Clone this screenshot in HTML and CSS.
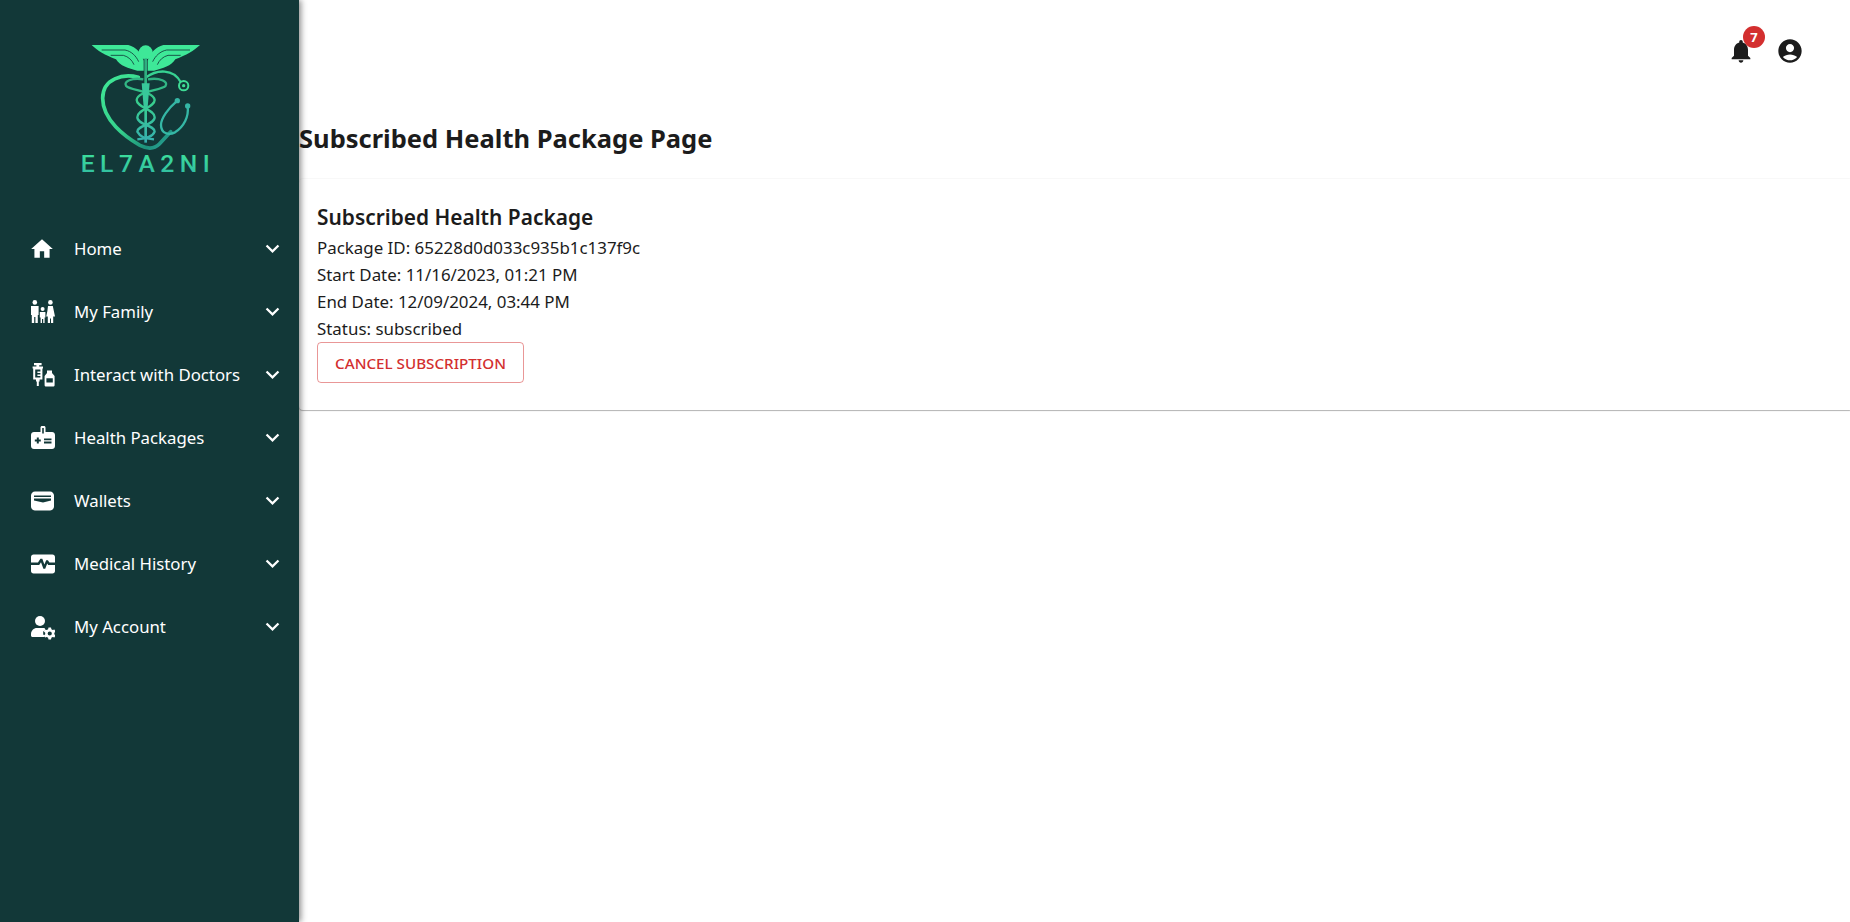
FILE: index.html
```html
<!DOCTYPE html>
<html lang="en">
<head>
    <meta charset="UTF-8">
    <title>Subscribed Health Package</title>
    <link rel="stylesheet" href="styles.css">
</head>
<body>
    <aside class="sidebar">
        <div class="logo">
            <svg width="180" height="170" viewBox="0 0 540 510">
                <defs>
                    <linearGradient id="logo-grad" x1="0" y1="0" x2="0" y2="1">
                        <stop offset="0" stop-color="#3fe79a"/>
                        <stop offset="1" stop-color="#2fb7a2"/>
                    </linearGradient>
                    <linearGradient id="staff-grad" gradientUnits="userSpaceOnUse" x1="0" y1="170" x2="0" y2="370">
                        <stop offset="0" stop-color="#2fae80"/>
                        <stop offset="0.4" stop-color="#38cf8f"/>
                        <stop offset="1" stop-color="#36aeb0"/>
                    </linearGradient>
                    <linearGradient id="heart-grad" gradientUnits="userSpaceOnUse" x1="125" y1="170" x2="320" y2="385">
                        <stop offset="0" stop-color="#40e896"/>
                        <stop offset="0.55" stop-color="#35d08c"/>
                        <stop offset="0.85" stop-color="#1d8f7a"/>
                        <stop offset="1" stop-color="#2ba79a"/>
                    </linearGradient>
                </defs>
                <!-- wings -->
                <path fill="#3ee898" d="M95 75H205C228 80 247 102 251 122V152H232C205 145 180 138 168 118 135 105 112 92 95 75Z"/>
                <path fill="#3ee898" d="M420 75H310C287 80 268 102 263 122V152H282C309 145 334 138 346 118 379 105 402 92 420 75Z"/>
                <path fill="none" stroke="#123838" stroke-width="2.5" d="M125 90H195C215 94 228 108 236 125M152 106H190C205 110 216 120 222 134"/>
                <path fill="none" stroke="#123838" stroke-width="2.5" d="M390 90H320C300 94 286 108 278 125M362 106H324C309 110 298 120 292 134"/>
                <circle cx="257" cy="97" r="21" fill="#3ee898"/>
                <!-- heart and stethoscope tube -->
                <path fill="none" stroke="url(#heart-grad)" stroke-width="11" stroke-linecap="round" d="M235 172C190 160 128 175 128 235 128 300 195 350 240 376 268 390 285 385 298 372L332 335"/>
                <path fill="none" stroke="#37d292" stroke-width="7" d="M258 172C290 148 340 145 362 186"/>
                <circle cx="371" cy="197" r="14" fill="none" stroke="#3fdc95" stroke-width="6"/>
                <circle cx="371" cy="197" r="5" fill="#3fdc95"/>
                <!-- staff and snakes -->
                <path fill="none" stroke="url(#staff-grad)" stroke-width="8" d="M257 115V368"/>
                <path fill="none" stroke="url(#staff-grad)" stroke-width="7" d="M250 178C215 172 190 185 198 197 210 212 280 212 284 240 284 262 232 268 232 292 232 315 284 315 284 335 278 350 262 355 232 358"/>
                <path fill="none" stroke="url(#staff-grad)" stroke-width="7" d="M264 178C300 172 325 185 317 197 305 212 232 212 230 240 230 262 284 268 284 292 284 315 232 315 232 335 240 350 252 355 282 358"/>
                <path fill="#38c79a" d="M245 190H269L263 262 257 272 251 262Z"/>
                <path fill="none" stroke="#35b7a5" stroke-width="7" stroke-linecap="round" d="M352 242C325 265 303 295 303 315 303 340 325 347 345 337 372 320 387 290 383 258"/>
                <circle cx="352" cy="242" r="8" fill="#35b7a5"/>
                <circle cx="383" cy="258" r="8" fill="#35b7a5"/>
                <text class="logo-text" x="62" y="456" fill="url(#logo-grad)" textLength="387">EL7A2NI</text>
            </svg>
        </div>
        <nav class="menu">
            <a class="menu-item">
                <svg class="menu-icon" viewBox="0 0 24 24"><path d="M10 20v-6h4v6h5v-8h3L12 3 2 12h3v8z"/></svg>
                <span class="menu-label">Home</span>
                <svg class="chevron" viewBox="0 0 24 24"><path d="M16.59 8.59 12 13.17 7.41 8.59 6 10l6 6 6-6z"/></svg>
            </a>
            <a class="menu-item">
                <svg class="menu-icon" viewBox="-2 -1 26 26"><circle cx="3.8" cy="2.4" r="2.3"/><circle cx="19.4" cy="2.4" r="2.3"/><circle cx="11.6" cy="9" r="2"/><path d="M0 6H7.6V15H6.8V23H4.4V17H3.2V23H.8V15H0ZM8.8 12H14.4V17.6H13.6V23H12.2V19H11V23H9.6V17.6H8.8ZM17 6H21.8L24 16.6H22.2V23H20V18.4H19V23H16.8V16.6H15.2L16.4 11Z"/></svg>
                <span class="menu-label">My Family</span>
                <svg class="chevron" viewBox="0 0 24 24"><path d="M16.59 8.59 12 13.17 7.41 8.59 6 10l6 6 6-6z"/></svg>
            </a>
            <a class="menu-item">
                <svg class="menu-icon" viewBox="-2 -1 26 26"><path fill-rule="evenodd" d="M3 0H10.6V2.2H8.2V3.5H12V5.6H11.4V16.4H8.6V18.5H7.8V23H5.8V18.5H5V16.4H2.2V5.6H1.6V3.5H5.4V2.2H3ZM4.2 6.4V14.4H9.4V13H6.4V11.4H9.4V10H6.4V8.4H9.4V6.4Z"/><path fill-rule="evenodd" d="M16 7.5H21V10L23.6 13V22C23.6 23 23 23.6 22 23.6H15.2C14.2 23.6 13.6 23 13.6 22V13L16 10ZM15.4 15.2V19.4H21.8V15.2Z"/></svg>
                <span class="menu-label">Interact with Doctors</span>
                <svg class="chevron" viewBox="0 0 24 24"><path d="M16.59 8.59 12 13.17 7.41 8.59 6 10l6 6 6-6z"/></svg>
            </a>
            <a class="menu-item">
                <svg class="menu-icon" viewBox="-2 -1 26 26"><path fill-rule="evenodd" d="M9.5 6V1.5C9.5.7 10.2 0 11 0H13C13.8 0 14.5.7 14.5 1.5V6H21C22.7 6 24 7.3 24 9V20C24 21.7 22.7 23 21 23H3C1.3 23 0 21.7 0 20V9C0 7.3 1.3 6 3 6ZM11.2 7.6H12.8V2H11.2ZM5.8 11.6V13.6H3.8V15.6H5.8V17.6H7.8V15.6H9.8V13.6H7.8V11.6ZM13 12.4V14.2H20.5V12.4ZM13 15.6V17.4H20.5V15.6Z"/></svg>
                <span class="menu-label">Health Packages</span>
                <svg class="chevron" viewBox="0 0 24 24"><path d="M16.59 8.59 12 13.17 7.41 8.59 6 10l6 6 6-6z"/></svg>
            </a>
            <a class="menu-item">
                <svg class="menu-icon" viewBox="-2 -1 26 26"><path fill-rule="evenodd" d="M4 2.5H19C21.2 2.5 23 4.3 23 6.5V17.5C23 19.7 21.2 21.5 19 21.5H4C1.8 21.5 0 19.7 0 17.5V6.5C0 4.3 1.8 2.5 4 2.5ZM3 6.5V8H20V6.5ZM3 9.4V11.4L12 13.6 20 11.6V9.4Z"/></svg>
                <span class="menu-label">Wallets</span>
                <svg class="chevron" viewBox="0 0 24 24"><path d="M16.59 8.59 12 13.17 7.41 8.59 6 10l6 6 6-6z"/></svg>
            </a>
            <a class="menu-item">
                <svg class="menu-icon" viewBox="-2 -1 26 26"><path d="M2.5 2.5H21.5C22.9 2.5 24 3.6 24 5V10.6H18.4L16.9 8.2H15.2L13.4 12.6 11.3 6.8H9.4L7 10.6H0V5C0 3.6 1.1 2.5 2.5 2.5ZM0 13H8.2L10 10.2 12.4 16.8H14.2L16.2 11.6 17.2 13H24V19C24 20.4 22.9 21.5 21.5 21.5H2.5C1.1 21.5 0 20.4 0 19Z"/></svg>
                <span class="menu-label">Medical History</span>
                <svg class="chevron" viewBox="0 0 24 24"><path d="M16.59 8.59 12 13.17 7.41 8.59 6 10l6 6 6-6z"/></svg>
            </a>
            <a class="menu-item">
                <svg class="menu-icon" viewBox="-2 -1 26 26"><circle cx="9" cy="6" r="5"/><path d="M6 13H12C12.8 13 13.4 13.1 14 13.4V15.6L12.2 16.6V19.4L13.6 20.4V22H1.5C.7 22 0 21.3 0 20.5V19C0 15.7 2.7 13 6 13Z"/><path fill-rule="evenodd" d="M17.5 12.5H20L20.4 14.2 21.7 15 23.4 14.4 24.6 16.6 23.3 17.8V19.3L24.6 20.5 23.4 22.6 21.7 22.1 20.4 22.8 20 24.5H17.5L17.1 22.8 15.8 22.1 14.1 22.6 12.9 20.5 14.2 19.3V17.8L12.9 16.6 14.1 14.4 15.8 15 17.1 14.2ZM18.75 16.4A2.1 2.1 0 1 0 18.75 20.6 2.1 2.1 0 1 0 18.75 16.4Z"/></svg>
                <span class="menu-label">My Account</span>
                <svg class="chevron" viewBox="0 0 24 24"><path d="M16.59 8.59 12 13.17 7.41 8.59 6 10l6 6 6-6z"/></svg>
            </a>
        </nav>
    </aside>
    <div class="content">
        <header class="topbar">
            <span class="bell">
                <svg viewBox="0 0 24 24"><path d="M12 22c1.1 0 2-.9 2-2h-4c0 1.1.89 2 2 2zm6-6v-5c0-3.07-1.64-5.64-4.5-6.32V4c0-.83-.67-1.5-1.5-1.5s-1.5.67-1.5 1.5v.68C7.63 5.36 6 7.92 6 11v5l-2 2v1h16v-1l-2-2z"/></svg>
                <span class="badge">7</span>
            </span>
            <svg class="account" viewBox="0 0 24 24"><path d="M12 2C6.48 2 2 6.48 2 12s4.48 10 10 10 10-4.48 10-10S17.52 2 12 2zm0 4c1.93 0 3.5 1.57 3.5 3.5S13.93 13 12 13s-3.5-1.57-3.5-3.5S10.07 6 12 6zm0 14c-2.03 0-4.43-.82-6.14-2.88C7.55 15.8 9.68 15 12 15s4.45.8 6.14 2.12C16.43 19.18 14.03 20 12 20z"/></svg>
        </header>
        <h1 class="page-title">Subscribed Health Package Page</h1>
        <section class="card">
            <h2>Subscribed Health Package</h2>
            <p>Package ID: 65228d0d033c935b1c137f9c</p>
            <p>Start Date: 11/16/2023, 01:21 PM</p>
            <p>End Date: 12/09/2024, 03:44 PM</p>
            <p>Status: subscribed</p>
            <button class="cancel-btn">CANCEL SUBSCRIPTION</button>
        </section>
    </div>
</body>
</html>
```

FILE: styles.css
```css
html, body {
    height: 100%;
}
body {
    margin: 0;
    display: flex;
    background: #fff;
    color: #1c1c1c;
    font-family: "Noto Sans", Arial, sans-serif;
    overflow: hidden;
}
.sidebar {
    width: 299px;
    flex-shrink: 0;
    background: #123838;
    box-shadow: 2px 0 6px rgba(0,0,0,0.45);
    position: relative;
    z-index: 1;
}
.logo {
    padding: 20px 0 0 60px;
    height: 197px;
}
.logo svg {
    display: block;
}
.logo-text {
    font-family: Roboto, sans-serif;
    font-size: 74px;
    font-weight: 500;
}
.menu-item {
    display: flex;
    align-items: center;
    height: 63px;
    padding: 0 13px 0 29px;
    color: #fff;
}
.menu-icon {
    width: 26px;
    height: 26px;
    fill: #fff;
    margin-right: 19px;
}
.menu-label {
    flex: 1;
    font-size: 16.8px;
}
.chevron {
    width: 27px;
    height: 27px;
    fill: #fff;
}
.content {
    flex: 1;
    min-width: 0;
}
.topbar {
    display: flex;
    justify-content: flex-end;
    align-items: center;
    gap: 21px;
    height: 101px;
    padding-right: 46px;
}
.topbar svg {
    width: 28px;
    height: 28px;
    fill: #1c1c1c;
    display: block;
}
.bell {
    position: relative;
}
.badge {
    position: absolute;
    top: -11px;
    left: 16px;
    width: 22px;
    height: 22px;
    border-radius: 50%;
    background: #d32f2f;
    color: #fff;
    font-size: 13px;
    font-weight: 700;
    text-align: center;
    line-height: 22px;
}
.page-title {
    margin: 0;
    font-size: 25.5px;
    font-weight: 700;
    line-height: 36px;
    height: 78px;
    padding-top: 19px;
    box-sizing: border-box;
}
.card {
    padding: 23px 18px 24px 18px;
    height: 231px;
    box-sizing: border-box;
    border-radius: 4px 0 0 4px;
    box-shadow: 0 1px 1px rgba(0,0,0,0.3), 0 -1px 1px rgba(0,0,0,0.03);
}
.card h2 {
    margin: 0 0 2px;
    font-size: 20.9px;
    font-weight: 600;
    line-height: 30px;
}
.card p {
    margin: 0;
    font-size: 16.9px;
    line-height: 27px;
}
.cancel-btn {
    display: block;
    width: 207px;
    height: 41px;
    padding: 0;
    background: none;
    border: 1px solid rgba(211,47,47,0.5);
    border-radius: 4px;
    color: #d32f2f;
    font-family: inherit;
    font-size: 15.2px;
    font-weight: 500;
}
```
